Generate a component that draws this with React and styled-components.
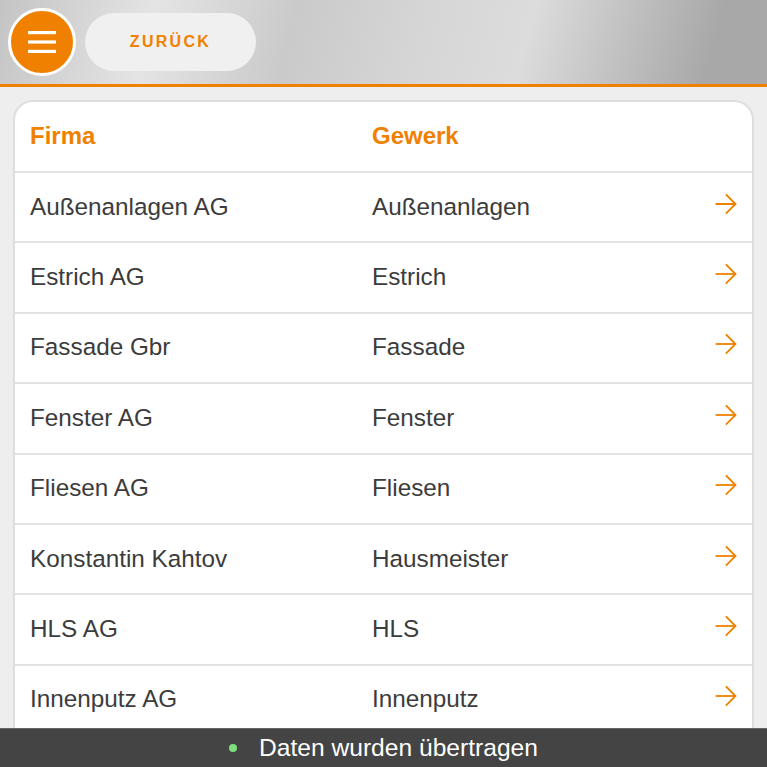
import React from 'react';
import styled, { createGlobalStyle } from 'styled-components';

const GlobalStyle = createGlobalStyle`
html, body {
	margin: 0;
	padding: 0;
	background: #eeeeee;
	font-family: 'Liberation Sans', Arial, sans-serif;
	overflow: hidden;
}
`;

const Page = styled.div`
height: 767px;
display: flex;
flex-direction: column;
position: relative;
overflow: hidden;
`;

const TopBar = styled.header`
height: 84px;
flex-shrink: 0;
display: flex;
align-items: center;
gap: 9px;
padding: 0 8px;
border-bottom: 3px solid #f08100;
background: linear-gradient(105deg, #c4c4c4 0%, #e4e4e4 20%, #cacaca 38%, #d6d6d6 55%, #dcdcdc 68%, #bdbdbd 82%, #a8a8a8 92%, #a8a8a8 100%);
`;

const MenuButton = styled.button`
width: 68px;
height: 68px;
border-radius: 50%;
border: 3px solid #ffffff;
background: #f08100;
display: flex;
align-items: center;
justify-content: center;
padding: 0;
box-sizing: border-box;
`;

const BackButton = styled.button`
width: 171px;
height: 58px;
border: none;
border-radius: 29px;
background: #f0f0f0;
color: #f08100;
font-family: 'Liberation Sans', Arial, sans-serif;
font-weight: bold;
font-size: 16px;
letter-spacing: 2.3px;
padding: 0;
`;

const Card = styled.div`
margin: 13px 13px 0 13px;
background: #ffffff;
border: 2px solid #dedede;
border-bottom: none;
border-radius: 20px 20px 0 0;
flex: 1;
overflow: hidden;
`;

const Row = styled.div`
height: ${(p) => (p.$head ? 69 : 68.4)}px;
box-sizing: content-box;
display: grid;
grid-template-columns: 342px 1fr 60px;
align-items: center;
padding-left: 15px;
border-bottom: 2px solid #e2e2e2;
`;

const HeadCell = styled.div`
color: #f08100;
font-weight: bold;
font-size: 24px;
margin-bottom: 1px;
`;

const Cell = styled.div`
color: #3c3c3c;
font-size: 24.3px;
margin-bottom: 1px;
`;

const ArrowCell = styled.div`
display: flex;
align-items: center;
justify-content: flex-end;
padding-right: 15px;
margin-bottom: 7px;
`;

const StatusBar = styled.div`
position: absolute;
left: 0;
right: 0;
bottom: 0;
height: 38px;
background: #444444;
border-top: 1px solid #666;
display: flex;
align-items: center;
justify-content: center;
gap: 22px;
color: #ffffff;
font-size: 24.6px;
`;

const Dot = styled.span`
width: 8px;
height: 8px;
border-radius: 50%;
background: #7ee07a;
`;

const Hamburger = () => (
	<svg width="30" height="24" viewBox="0 0 30 24">
		<rect x="1" y="1" width="28" height="3.2" fill="#ffffff" />
		<rect x="1" y="10.4" width="28" height="3.2" fill="#ffffff" />
		<rect x="1" y="19.8" width="28" height="3.2" fill="#ffffff" />
	</svg>
);

const Arrow = () => (
	<svg width="22" height="22" viewBox="0 0 22 22" fill="none" stroke="#f08100" strokeWidth="1.8" strokeLinecap="square">
		<path d="M1.5 11 H20" />
		<path d="M11.5 2 L20.5 11 L11.5 20" />
	</svg>
);

const rows = [
	['Außenanlagen AG', 'Außenanlagen'],
	['Estrich AG', 'Estrich'],
	['Fassade Gbr', 'Fassade'],
	['Fenster AG', 'Fenster'],
	['Fliesen AG', 'Fliesen'],
	['Konstantin Kahtov', 'Hausmeister'],
	['HLS AG', 'HLS'],
	['Innenputz AG', 'Innenputz'],
];

const App = () => (
	<Page>
		<GlobalStyle />
		<TopBar>
			<MenuButton><Hamburger /></MenuButton>
			<BackButton>ZURÜCK</BackButton>
		</TopBar>
		<Card>
			<Row $head>
				<HeadCell>Firma</HeadCell>
				<HeadCell>Gewerk</HeadCell>
				<div />
			</Row>
			{rows.map(([firma, gewerk]) => (
				<Row key={firma}>
					<Cell>{firma}</Cell>
					<Cell>{gewerk}</Cell>
					<ArrowCell><Arrow /></ArrowCell>
				</Row>
			))}
		</Card>
		<StatusBar>
			<Dot />
			<span>Daten wurden übertragen</span>
		</StatusBar>
	</Page>
);

export default App;
